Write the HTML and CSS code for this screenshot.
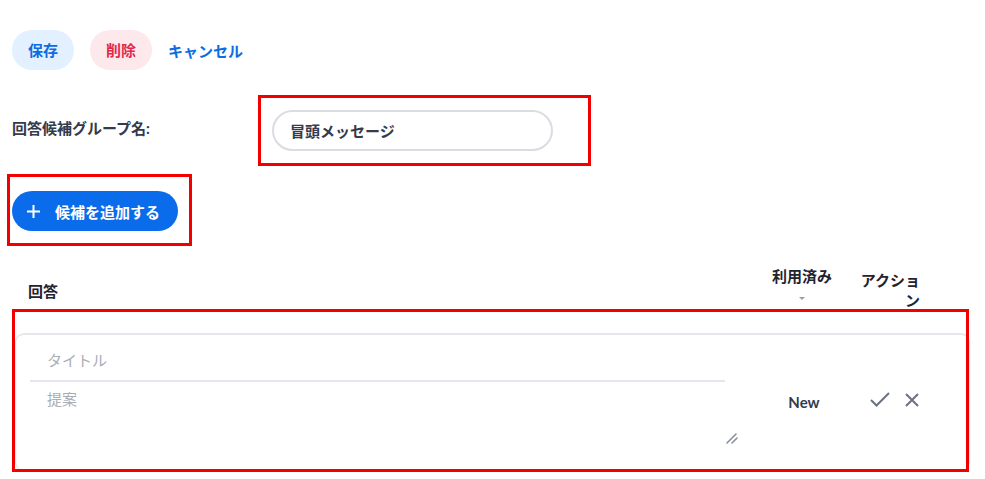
FILE: index.html
```html
<!DOCTYPE html>
<html lang="ja">
<head>
<meta charset="utf-8">
<title>回答候補グループ</title>
<link rel="stylesheet" href="styles.css">
</head>
<body>
<div class="page">
  <div class="actions">
    <button class="pill pill-save">保存</button>
    <button class="pill pill-delete">削除</button>
    <button class="link-btn">キャンセル</button>
  </div>

  <div class="name-row">
    <label class="name-label">回答候補グループ名:</label>
    <div class="hl hl-input">
      <div class="name-input">冒頭メッセージ</div>
    </div>
  </div>

  <div class="hl hl-add">
    <button class="add-btn">
      <svg class="plus" width="13" height="13" viewBox="0 0 13 13"><path d="M6.5 0V13M0 6.5H13" stroke="#fff" stroke-width="2"/></svg>
      <span>候補を追加する</span>
    </button>
  </div>

  <div class="table">
    <div class="thead">
      <div class="th th-answer">回答</div>
      <div class="th th-used">
        <span>利用済み</span>
        <span class="caret"></span>
      </div>
      <div class="th th-action">アクション</div>
    </div>

    <div class="row-wrap">
      <div class="card">
        <div class="fields">
          <div class="title-field">タイトル</div>
          <div class="body-field">
            <span>提案</span>
            <svg class="resize" width="12" height="13" viewBox="0 0 12 13"><path d="M1 12L10 3M6 12L11 7" stroke="#8a8f9c" stroke-width="1.6" stroke-linecap="round"/></svg>
          </div>
        </div>
        <div class="cell-used">New</div>
        <div class="cell-action">
          <svg width="20" height="15" viewBox="0 0 20 15"><path d="M1 8L6.5 13.5L19 1" fill="none" stroke="#6b7280" stroke-width="2"/></svg>
          <svg width="14" height="14" viewBox="0 0 14 14"><path d="M1 1L13 13M13 1L1 13" stroke="#6b7280" stroke-width="2"/></svg>
        </div>
      </div>
    </div>
  </div>
</div>
</body>
</html>
```

FILE: styles.css
```css
* { box-sizing: border-box; }

body {
  margin: 0;
  background: #fff;
  font-family: Lato, "Noto Sans CJK JP", sans-serif;
  font-size: 15px;
  color: #333b4d;
}

.page {
  padding: 30px 0 0 12px;
  width: 985px;
}

button {
  font-family: inherit;
  border: none;
  cursor: pointer;
}

.actions {
  display: flex;
  align-items: center;
  gap: 16px;
  height: 40px;
}

.pill {
  height: 40px;
  padding: 0 16px;
  border-radius: 20px;
  font-size: 15px;
  font-weight: 700;
  line-height: 20px;
}

.pill-save { background: #e3f0ff; color: #0b6ce3; }
.pill-delete { background: #fde8ec; color: #e0294c; }

.link-btn {
  background: none;
  padding: 0;
  font-size: 15px;
  font-weight: 700;
  color: #0b6ce3;
}

.name-row {
  margin-top: 25px;
  display: flex;
  align-items: center;
}

.name-label {
  width: 246px;
  font-weight: 700;
  color: #333b4d;
  line-height: 20px;
  margin-top: -5px;
}

.hl { border: 3px solid #f20000; }

.hl-input {
  padding: 12px 35px 12px 11px;
}

.name-input {
  width: 281px;
  height: 41px;
  border: 2px solid #d9dce1;
  border-radius: 21px;
  padding: 0 16px;
  display: flex;
  align-items: center;
  font-weight: 700;
  color: #333b4d;
}

.hl-add {
  display: inline-block;
  margin: 8px 0 0 -5px;
  padding: 14px 11px 12px 2px;
}

.add-btn {
  display: flex;
  align-items: center;
  height: 40px;
  width: 166px;
  padding: 0 0 0 15px;
  border-radius: 20px;
  background: #0a6cea;
  color: #fff;
  font-size: 15px;
  font-weight: 700;
}

.plus { margin-right: 15px; }

.table { width: 957px; }

.thead {
  margin-top: 20px;
  height: 43px;
  display: grid;
  grid-template-columns: 1fr 60px 60px;
  column-gap: 28px;
  padding-right: 49px;
  color: #1f2430;
  font-weight: 700;
  line-height: 20px;
}

.th-answer { padding: 15px 0 0 16px; }

.th-used {
  display: flex;
  flex-direction: column;
  align-items: center;
}

.caret {
  margin-top: 11px;
  width: 0;
  height: 0;
  border-top: 3px solid #9aa0a8;
  border-left: 3px solid transparent;
  border-right: 3px solid transparent;
}

.th-action {
  padding-top: 4px;
  text-align: right;
}

.row-wrap {
  position: relative;
  padding: 24px 0 1px 3px;
}

.row-wrap::after {
  content: "";
  position: absolute;
  inset: 0;
  border: 3px solid #f20000;
  pointer-events: none;
}

.card {
  width: 955px;
  height: 138px;
  border: 1px solid #e6e7ec;
  border-top-width: 2px;
  border-radius: 9px;
  display: grid;
  grid-template-columns: 1fr 60px 60px;
  column-gap: 28px;
  align-items: center;
  padding: 0 47px 0 14px;
}

.fields {
  align-self: start;
  padding-top: 4px;
}

.title-field {
  width: 695px;
  height: 43px;
  padding: 11px 0 0 17px;
  line-height: 20px;
  color: #a9adb6;
  border-bottom: 2px solid #e6e7ec;
}

.body-field {
  position: relative;
  width: 711px;
  height: 67px;
  padding: 7px 0 0 17px;
  line-height: 20px;
  color: #a9adb6;
}

.resize {
  position: absolute;
  right: 3px;
  bottom: 5px;
}

.cell-used {
  text-align: center;
  font-weight: 700;
  color: #333b4d;
  margin-top: -2px;
}

.cell-action {
  display: flex;
  justify-content: center;
  align-items: center;
  gap: 15px;
  padding-left: 4px;
  margin-top: -6px;
}
```
